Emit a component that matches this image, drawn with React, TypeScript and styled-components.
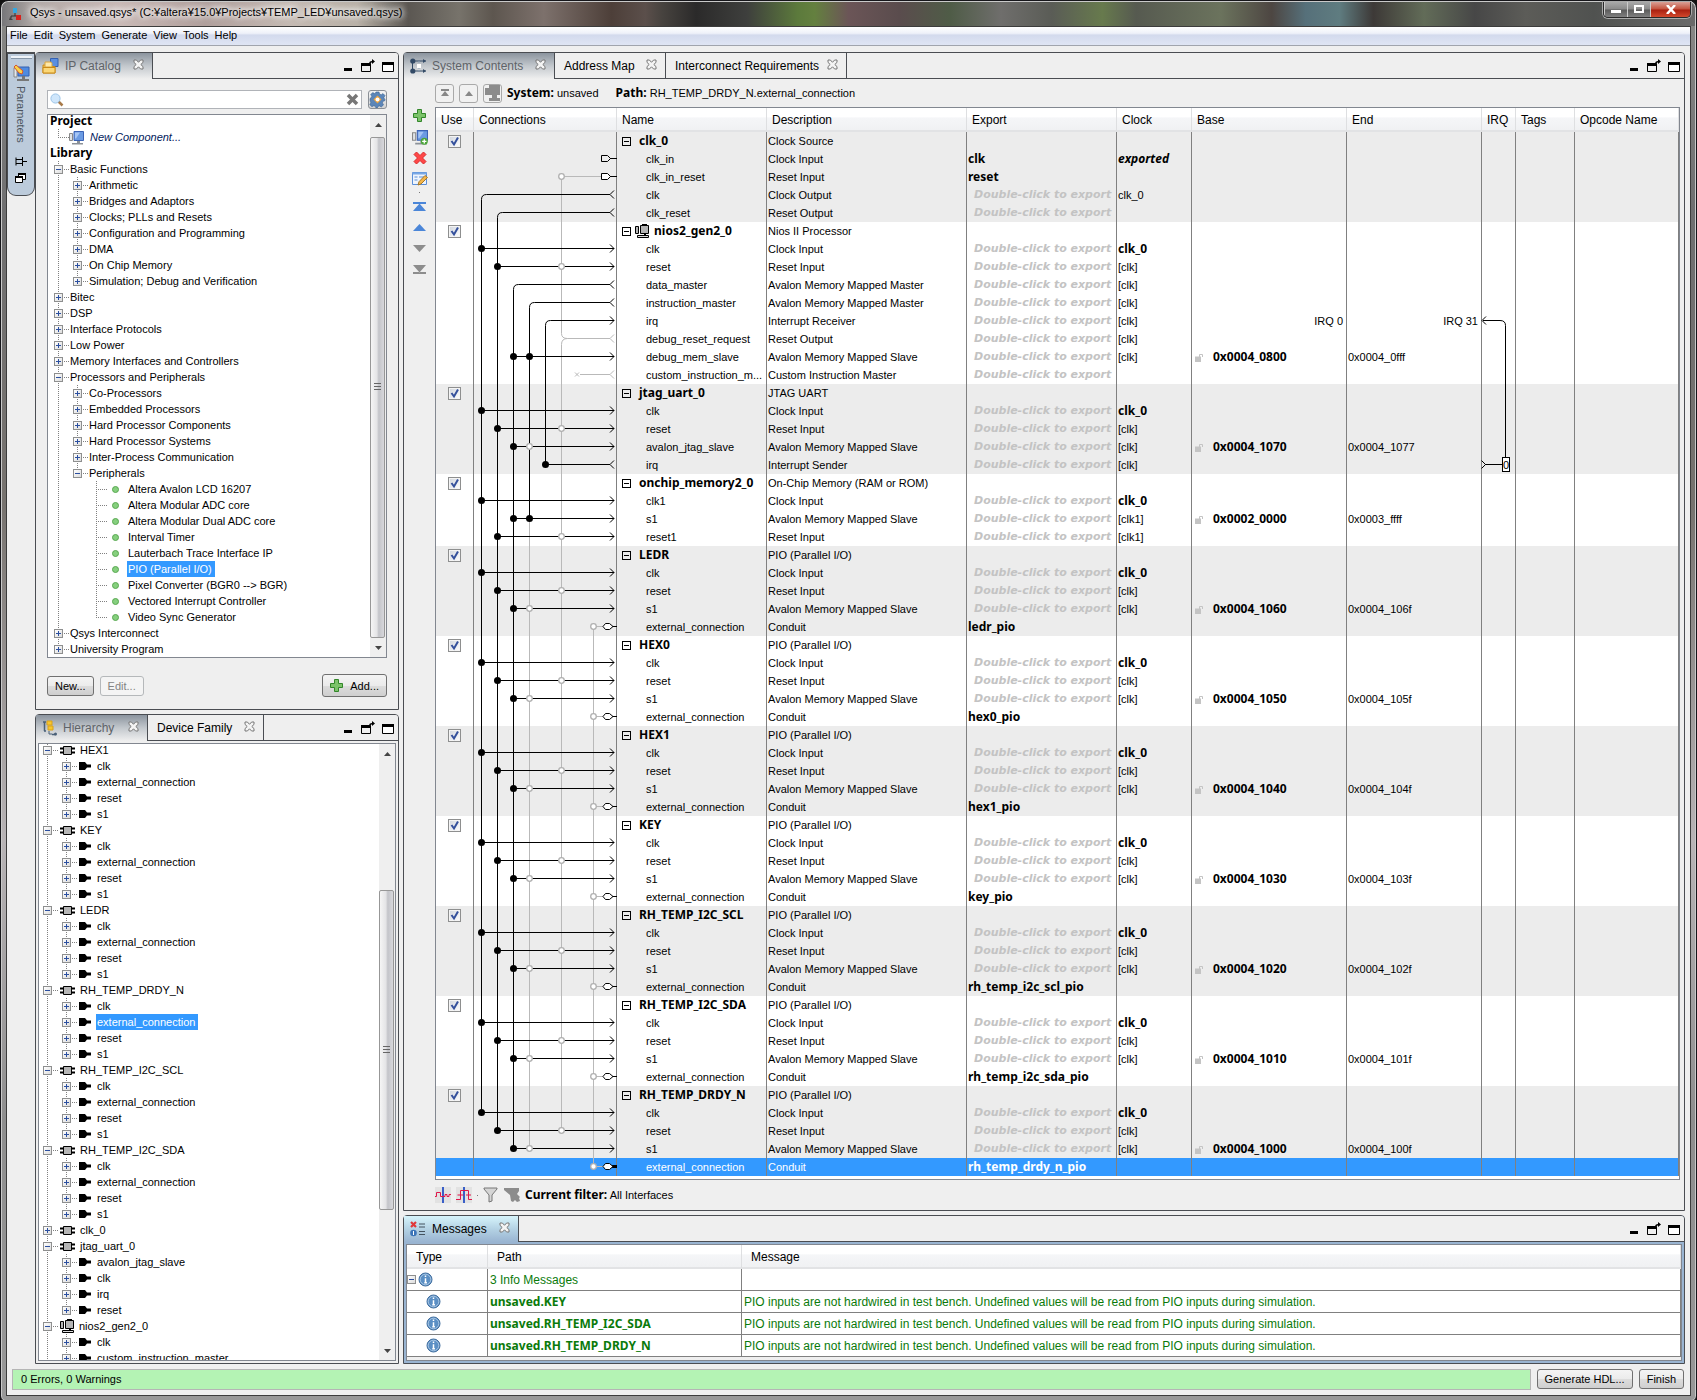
import React from "react";
import styled, { createGlobalStyle, css } from "styled-components";

const ui = `"Liberation Sans", "Noto Sans CJK JP", sans-serif`;
const strong = `"Noto Sans", "Open Sans", sans-serif`;
const ink = "#4a4d52";

const Global = createGlobalStyle`
  *, *::before, *::after { box-sizing: border-box; }
  body { margin: 0; background: #111; font: 11px/16px ${ui}; color: #000; }
  button, input { font: inherit; color: inherit; margin: 0; padding: 0; }
  button { border: 0; background: none; }
  svg { display: block; flex: none; }
`;

/* ---------- window frame ---------- */

const Frame = styled.div`
  display: flex;
  flex-direction: column;
  min-height: 100vh;
  padding: 0 5px 5px;
  border: 1px solid #16161a;
  border-radius: 8px 8px 6px 6px;
  box-shadow: inset 0 0 0 1px #c9c9c9;
  background: linear-gradient(180deg, #8a8a88 0, #6f6f70 15%, #77736f 36%, #b8b4b6 60%, #8e8e8e 80%, #989898 100%);
`;

const TitleBar = styled.header`
  display: flex;
  align-items: flex-start;
  height: 24px;
  margin: 1px -4px 0;
  padding-left: 6px;
  border-radius: 7px 7px 0 0;
  background: linear-gradient(90deg,
    #77777a 0, #b3aba8 2%, #c9b9b6 7%, #b09f9c 12%, #c5bab3 17%, #b9b1a7 21%, #5b5752 24%,
    #77736b 27%, #5d564f 29%, #7d716c 32%, #4d3f39 36%, #5b4f4b 38%, #47433f 39%, #2b2a2a 41%,
    #3e3f3d 44%, #5c7a3c 47%, #64803f 48%, #6b5557 50%, #5a4c4d 53%, #4f5c47 56%, #6f6e6c 59%,
    #5a5c56 62%, #677a4d 65%, #565a50 67%, #6b735d 72%, #4d4642 75%, #56707a 77%, #5f7c80 79%,
    #3d3937 81%, #626c58 84%, #474747 87%, #5c5c58 90%, #505250 94%, #6a6a6a 100%);
`;

const Title = styled.h1`
  flex: 1;
  margin: 2px 0 0 6px;
  font: 11px/17px ${ui};
  text-shadow: 0 0 6px #fff, 0 0 6px #fff, 0 0 8px #fff;
`;

const Caption = styled.div`
  display: flex;
  margin-right: 4px;
  border: 1px solid #2a2a2a;
  border-top: 0;
  border-radius: 0 0 5px 5px;
  overflow: hidden;
  box-shadow: 0 0 0 1px #aaa;
`;

const CaptionButton = styled.button<{ $close?: boolean }>`
  display: grid;
  place-items: center;
  width: ${(p) => (p.$close ? 40 : 23)}px;
  height: 15px;
  border-left: 1px solid #ccc;
  background: ${(p) =>
    p.$close
      ? "linear-gradient(#d9a096 0, #c4513c 48%, #a81f10 52%, #d2482c 100%)"
      : "linear-gradient(#a9a9a9 0, #8a8a8a 48%, #5a5a5a 52%, #808080 100%)"};
`;

const Client = styled.div`
  display: flex;
  flex: 1;
  flex-direction: column;
  border: 1px solid #3c3c3c;
  background: #efefef;
`;

const MenuBar = styled.nav`
  display: flex;
  gap: 6px;
  height: 19px;
  padding-left: 3px;
  border-bottom: 1px solid #a0a4ad;
  background: linear-gradient(#fff 0, #eef1f9 35%, #d3daed 45%, #dfe5f4 100%);
`;

const MenuItem = styled.button`
  height: 16px;
  line-height: 16px;
`;

const Workspace = styled.main`
  display: flex;
  flex: 1;
  padding: 6px 5px 0 0;
`;

const Dock = styled.aside`
  display: flex;
  flex-direction: column;
  align-items: center;
  gap: 5px;
  width: 28px;
  height: 144px;
  padding-top: 2px;
  border: 1px solid ${ink};
  border-top-width: 2px;
  border-radius: 0 0 9px 9px;
  background: #bccbdb;
`;

const Grip = styled.i`
  width: 21px;
  height: 3px;
  border: solid #8797a8;
  border-width: 0 0 1px;
  background: #eef3f8;
`;

const DockButton = styled.button`
  display: grid;
  place-items: center;
`;

const DockLabel = styled.span`
  writing-mode: vertical-rl;
  height: 66px;
  color: #4b545d;
`;

const LeftColumn = styled.div`
  display: flex;
  flex: none;
  flex-direction: column;
  gap: 4px;
  width: 364px;
`;

const RightColumn = styled.div`
  display: flex;
  flex: 1;
  flex-direction: column;
  gap: 4px;
  min-width: 0;
  margin-left: 4px;
`;

/* ---------- panels and tabs ---------- */

const Panel = styled.section<{ $grow?: boolean; $fill?: string }>`
  display: flex;
  flex-direction: column;
  min-height: 0;
  ${(p) => p.$grow && "flex: 1;"}
  border: 1px solid ${ink};
  border-radius: 4px 4px 0 0;
  background: ${(p) => p.$fill || "#efefef"};
`;

const TabStrip = styled.div`
  display: flex;
  flex: none;
  height: 26px;
  border-radius: 3px 3px 0 0;
  background: #efefef;
`;

const TabBox = styled.div<{ $width: number; $tone: "on" | "off" | "focus" }>`
  display: flex;
  align-items: center;
  width: ${(p) => p.$width}px;
  padding: 0 8px 0 6px;
  border-right: 1px solid ${ink};
  ${(p) =>
    p.$tone === "on" &&
    css`
      background: linear-gradient(#8b949e, #c3c8cd 50%, #efefef);
      color: #5f6368;
    `}
  ${(p) =>
    p.$tone === "off" &&
    css`
      padding-left: 9px;
      border-bottom: 1px solid ${ink};
    `}
  ${(p) =>
    p.$tone === "focus" &&
    css`
      background: linear-gradient(#d6f4fb, #b4d2e4 50%, #99b4d1);
    `}
`;

const TabName = styled.button`
  display: flex;
  flex: 1;
  align-items: center;
  gap: 6px;
  font-size: 12px;
  white-space: nowrap;
`;

const TabClose = styled.button`
  margin-bottom: 3px;
`;

const StripEnd = styled.div`
  display: flex;
  flex: 1;
  justify-content: flex-end;
  align-items: flex-start;
  gap: 7px;
  padding: 6px 4px 0 0;
  border-bottom: 1px solid ${ink};
`;

const IconButton = styled.button`
  display: grid;
  place-items: center;
  flex: none;
`;

const CloseGlyph = () => (
  <svg width="11" height="11" viewBox="0 0 11 11">
    <path d="M1 1h2.4l2.1 2.3L7.6 1H10v2.4L7.8 5.5 10 7.6V10H7.6L5.5 7.8 3.4 10H1V7.6l2.2-2.1L1 3.4z" fill="#f4f4f4" stroke="#777" strokeWidth="1" />
  </svg>
);

interface TabProps {
  label: string;
  width: number;
  tone: "on" | "off" | "focus";
  icon?: React.ReactNode;
}

const Tab = ({ label, width, tone, icon }: TabProps) => (
  <TabBox $width={width} $tone={tone}>
    <TabName>
      {icon}
      {label}
    </TabName>
    <TabClose aria-label={`Close ${label}`}>
      <CloseGlyph />
    </TabClose>
  </TabBox>
);

const PanelControls = () => (
  <StripEnd>
    <IconButton aria-label="Minimize">
      <svg width="9" height="14"><rect y="9" width="8" height="3" /></svg>
    </IconButton>
    <IconButton aria-label="Float">
      <svg width="15" height="14">
        <path d="M1.500 4.500h9v8h-9z" fill="none" stroke="#000" />
        <path d="M1 4h9v3H1zM9 5c0-2 1-3 3-3V0l3 2.500L12 5V3.500c-1 0-1.500.5-1.500 1.500z" />
      </svg>
    </IconButton>
    <IconButton aria-label="Maximize">
      <svg width="12" height="14">
        <path d="M.5 4.500h11v8H.5z" fill="#fff" stroke="#000" />
        <path d="M0 3h12v3H0z" />
      </svg>
    </IconButton>
  </StripEnd>
);

/* ---------- icons ---------- */

const AppIcon = () => (
  <svg width="13" height="14" viewBox="0 0 13 14">
    <path d="M4 1h4v5H4z" fill="#35a8e0" />
    <path d="M6 6v3H2v2M6 9h4" stroke="#333" fill="none" />
    <path d="M1 10l3 3H0z" fill="#444" />
    <path d="M7 8h5v5H7z" fill="#d8221c" />
  </svg>
);

const Board = ({ size = 15, plus }: { size?: number; plus?: boolean }) => (
  <svg width={size} height={size} viewBox="0 0 15 15">
    <path d="M.5 3.500h3v7h-3z" fill="#e0e4e8" stroke="#888" />
    <path d="M5 1.500h9.500v9H5z" fill="#6b9be3" stroke="#3b63b5" />
    <path d="M6 2.500h5l-4 6H6z" fill="#a5c5f5" />
    <path d="M8 11h3v2H8zM3 13h11v1.500H3z" fill="#8b9198" />
    {plus && (
      <>
        <circle cx="11.500" cy="11.500" r="3.300" fill="#4ca53a" />
        <path d="M11.500 9.500v4M9.500 11.500h4" stroke="#fff" strokeWidth="1.200" />
      </>
    )}
  </svg>
);

const CatalogIcon = () => (
  <svg width="17" height="16" viewBox="0 0 17 16">
    <path d="M8.500.5H16v8H8.500z" fill="#5b8fe0" stroke="#3560b0" />
    <path d="M1 7h5l1 1.500h6V15H1z" fill="#f6c454" stroke="#c98a18" />
    <path d="M3 4h6l1 1.500V9H3z" fill="#ffe9a8" stroke="#d9a43a" />
    <path d="M1 9.500h12V15H1z" fill="#fbd777" stroke="#c98a18" />
  </svg>
);

const TreeIcon = () => (
  <svg width="15" height="16" viewBox="0 0 15 16">
    <path d="M1 2h3M2.500 2v9M2 11h2M10 14.500h4" stroke="#4a6078" strokeWidth="1.500" fill="none" />
    <path d="M5 1h5v4H5zM6 6h5v4H6z" fill="#f7c62d" stroke="#d9a21a" />
    <path d="M7 11v3h3" stroke="#4a6078" fill="none" />
    <circle cx="13.500" cy="14" r="1.500" fill="#4a6078" />
  </svg>
);

const ContentsIcon = () => (
  <svg width="16" height="16" viewBox="0 0 16 16">
    <path d="M2.500 3v11M2.500 3H16M2.500 13H16" stroke="#324a66" fill="none" />
    <circle cx="2.800" cy="3" r="2.600" fill="#324a66" />
    <circle cx="2.800" cy="13" r="2.600" fill="#324a66" />
    <path d="M9 3v10" stroke="#8fa3b8" strokeDasharray="2 1" />
    <path d="M7 6h4v4H7z" fill="#fff" />
    <path d="M13 1l3 2-3 2zM13 11l3 2-3 2z" fill="#324a66" />
  </svg>
);

const MessagesIcon = () => (
  <svg width="16" height="16" viewBox="0 0 16 16">
    <path d="M1 1l5 5M6 1L1 6" stroke="#e0383a" strokeWidth="2.200" />
    <circle cx="3.500" cy="12" r="3.300" fill="#3c74b8" />
    <path d="M3.500 10v4" stroke="#fff" />
    <path d="M9 3h6M9 6h6M9 10.500h6M9 13.500h6" stroke="#44525f" />
  </svg>
);

const Plus = () => (
  <svg width="13" height="13" viewBox="0 0 13 13">
    <path d="M4.500.5h4v4h4v4h-4v4h-4v-4h-4v-4h4z" fill="#7cc36a" stroke="#33862a" />
  </svg>
);

const Cross = () => (
  <svg width="14" height="14" viewBox="0 0 14 14">
    <path d="M3.500 1L7 4.500 10.500 1 13 3.500 9.500 7l3.500 3.500-2.500 2.500L7 9.500 3.500 13 1 10.500 4.500 7 1 3.500z" fill="#ff4747" stroke="#d92c2c" />
  </svg>
);

const EditIcon = () => (
  <svg width="16" height="15" viewBox="0 0 16 15">
    <path d="M.5 1.500h14v12H.5z" fill="#eef4fc" stroke="#5b8fd8" />
    <path d="M.5 1.500h14v2H.5z" fill="#79a8e6" />
    <path d="M2.500 6h3M2.500 9h3M7 6h5" stroke="#5b8fd8" />
    <path d="M13 4.500l2.500 2L9 13l-3 1 1-3.300z" fill="#f4b64a" stroke="#a5772a" />
  </svg>
);

const Arrow = ({ kind, color }: { kind: "top" | "up" | "down" | "bottom"; color: string }) => (
  <svg width="13" height="11" viewBox="0 0 13 11">
    {kind === "top" && <path d="M0 1h13v2H0zM6.500 2.500L13 10H0z" fill={color} />}
    {kind === "up" && <path d="M6.500 2L13 9H0z" fill={color} />}
    {kind === "down" && <path d="M6.500 9L13 2H0z" fill={color} />}
    {kind === "bottom" && <path d="M0 8h13v2H0zM6.500 8.500L13 1H0z" fill={color} />}
  </svg>
);

const Gear = () => (
  <svg width="17" height="17" viewBox="0 0 17 17">
    <path d="M7 1h3l.5 2 1.800.8L14 2.600l2 2-1.100 1.900.6 1.500.5.500v1l-2 .8-.6 1.600 1.100 2-2.200 2-1.900-1-1.500.6-.6 1.500H7l-.7-1.700-1.500-.6-2 1-2-2.100 1-1.900-.6-1.500L1 9V7.500l1-.5.800-1.700L1.700 3.600l2-2 1.900 1L6.500 2z" fill="#5c86b8" stroke="#3f6695" strokeWidth=".6" />
    <path d="M8.500 4.500l4 4-4 4-4-4z" fill="#f1a33b" />
    <circle cx="8.500" cy="8.500" r="2" fill="#fff" />
  </svg>
);

const Magnifier = () => (
  <svg width="14" height="14" viewBox="0 0 14 14">
    <path d="M8.500 8.500l4 4" stroke="#a87a4a" strokeWidth="2.500" />
    <circle cx="5.500" cy="5.500" r="4.600" fill="#cfe6fb" stroke="#9cc4e8" />
  </svg>
);

const Chip = () => (
  <svg width="16" height="11" viewBox="0 0 16 11">
    <path d="M0 3.500h15M0 7.500h15" stroke="#000" strokeWidth="2" />
    <path d="M3.500 1.500h8v8h-8z" fill="#b5b5b5" stroke="#000" />
  </svg>
);

const Plug = () => (
  <svg width="14" height="8" viewBox="0 0 14 8">
    <path d="M0 0h6l2 2.500h4v3H8L6 8H0z" />
  </svg>
);

const Cpu = () => (
  <svg width="15" height="14" viewBox="0 0 15 14">
    <path d="M.5 2.500h3v7h-3zM5.500 1.500h8v8h-8z" fill="#b5b5b5" stroke="#000" />
    <path d="M7 0h5v1H7zM9 10h2v2H9z" />
    <path d="M2.500 11.500h11v2h-11z" fill="#ddd" stroke="#000" />
  </svg>
);

const Funnel = ({ clear }: { clear?: boolean }) => (
  <svg width="16" height="16" viewBox="0 0 16 16">
    {clear ? (
      <path d="M0 1h15v3l-2 3 3 3-1 1 1 3-3 1-2-2-2 2-2-1-1-6L0 3z" fill="#8c8c8c" />
    ) : (
      <path d="M1 1h13v1L9 8v6l-3 1V8L1 2z" fill="#d5d5d5" stroke="#777" />
    )}
  </svg>
);

const Wave = ({ split }: { split?: boolean }) => (
  <svg width="16" height="16" viewBox="0 0 16 16">
    <path d="M0 0h16v16H0z" fill="#e2e2e2" />
    <path d="M7 0h2v16H7z" fill="#3a5fc8" />
    {split ? (
      <path d="M0 12.500h4.500V3.500h8v9H16M1.500 8h6M10 8h5" stroke="#e0174b" fill="none" />
    ) : (
      <path d="M0 9.500h1.500v-4h4v4H10v-2h2v2h2v-2h2" stroke="#e0174b" fill="none" />
    )}
  </svg>
);

const Info = () => (
  <svg width="15" height="15" viewBox="0 0 15 15">
    <circle cx="7.500" cy="7.500" r="6.500" fill="#5b8fc4" stroke="#3f6d9e" />
    <circle cx="7.500" cy="7.500" r="5.300" fill="none" stroke="#b9d2ea" strokeWidth=".8" />
    <path d="M7.500 3.500v1.600M7.500 6.300v4M6.300 10.800h2.600" stroke="#fff" strokeWidth="1.500" />
  </svg>
);

const Lock = () => (
  <svg width="9" height="9" viewBox="0 0 9 9">
    <path d="M0 3.500h6V9H0z" fill="#c4c4c4" />
    <path d="M4.500 4V1.500h3V4" fill="none" stroke="#c4c4c4" />
  </svg>
);

/* ---------- trees ---------- */

const Scroller = styled.div<{ $grow?: boolean }>`
  display: flex;
  min-height: 0;
  overflow: hidden;
  ${(p) => p.$grow && "flex: 1 1 0;"}
  border: 1px solid #828790;
  background: #fff;
`;

const TreeList = styled.ul<{ $indent: number }>`
  flex: 1;
  margin: -2px 0 0;
  padding: 0 0 0 ${(p) => p.$indent}px;
  list-style: none;
`;

const TreeItem = styled.li`
  display: flex;
  align-items: center;
  height: 16px;
  white-space: nowrap;
`;

const RootItem = styled(TreeItem)`
  margin-left: -4px;
  font: bold 12px/16px ${strong};
`;

const dotsV = "repeating-linear-gradient(180deg, #808080 0 1px, transparent 1px 2px)";
const dotsH = "repeating-linear-gradient(90deg, #808080 0 1px, transparent 1px 2px)";

const Guide = styled.i<{ $line: boolean }>`
  flex: none;
  width: 19px;
  height: 16px;
  background: ${(p) => (p.$line ? `${dotsV} 4px 0 / 1px 16px no-repeat` : "none")};
`;

const Joint = styled.span<{ $last?: boolean }>`
  display: flex;
  flex: none;
  align-items: center;
  width: 15px;
  height: 16px;
  background: ${dotsV} 4px 0 / 1px ${(p) => (p.$last ? 8 : 16)}px no-repeat,
    ${dotsH} 4px 8px / 11px 1px no-repeat;
`;

const Expander = styled.button<{ $dark?: boolean }>`
  display: grid;
  place-items: center;
  flex: none;
  width: 9px;
  height: 9px;
  border: 1px solid ${(p) => (p.$dark ? "#000" : "#8e8f8f")};
  background: ${(p) => (p.$dark ? "transparent" : "linear-gradient(135deg, #fff, #dcdcdc)")};
`;

const ExpandMark = ({ open, dark }: { open?: boolean; dark?: boolean }) => (
  <Expander $dark={dark} aria-label={open ? "Collapse" : "Expand"}>
    <svg width="5" height="5">
      <path d={open ? "M0 2.500h5" : "M0 2.500h5M2.500 0v5"} stroke={dark ? "#000" : "#2b4fa0"} />
    </svg>
  </Expander>
);

const NodeIcon = styled.span`
  margin: 0 3px 0 2px;
`;

const NodeLabel = styled.span<{ $selected?: boolean; $italic?: boolean }>`
  padding: 0 3px 0 1px;
  ${(p) => p.$selected && "background: #3399ff; color: #fff;"}
  ${(p) => p.$italic && "font-style: italic; color: #00205c;"}
`;

const Bullet = styled.i`
  width: 7px;
  height: 7px;
  margin: 0 8px 0 5px;
  border: 1px solid #58a850;
  border-radius: 50%;
  background: #86cf7e;
`;

const ScrollBar = styled.div`
  display: flex;
  flex: none;
  flex-direction: column;
  width: 16px;
  background: #efefef;
`;

const ScrollArrow = styled.button`
  display: grid;
  place-items: center;
  height: 19px;
`;

const Track = styled.div<{ $before: number; $after: number }>`
  display: flex;
  flex: 1;
  padding: ${(p) => p.$before}px 1px ${(p) => p.$after}px 0;
`;

const Thumb = styled.div`
  display: grid;
  flex: 1;
  place-items: center;
  border: 1px solid #979797;
  border-radius: 2px;
  background: linear-gradient(90deg, #f5f5f5, #e4e4e6 45%, #c3c4c9 60%, #d8d8dc);
`;

const Bar = ({ before = 0, after = 0 }: { before?: number; after?: number }) => (
  <ScrollBar>
    <ScrollArrow aria-label="Scroll up">
      <svg width="7" height="4"><path d="M3.500 0L7 4H0z" fill="#444" /></svg>
    </ScrollArrow>
    <Track $before={before} $after={after}>
      <Thumb>
        <svg width="7" height="9"><path d="M0 .5h7M0 3.500h7M0 6.500h7" stroke="#666" /></svg>
      </Thumb>
    </Track>
    <ScrollArrow aria-label="Scroll down">
      <svg width="7" height="4"><path d="M3.500 4L7 0H0z" fill="#444" /></svg>
    </ScrollArrow>
  </ScrollBar>
);

interface CatNode {
  name: string;
  kids?: CatNode[];
  leaf?: boolean;
}

const branch = (...names: string[]): CatNode[] => names.map((name) => ({ name }));

const library: CatNode[] = [
  {
    name: "Basic Functions",
    kids: branch("Arithmetic", "Bridges and Adaptors", "Clocks; PLLs and Resets", "Configuration and Programming", "DMA", "On Chip Memory", "Simulation; Debug and Verification"),
  },
  ...branch("Bitec", "DSP", "Interface Protocols", "Low Power", "Memory Interfaces and Controllers"),
  {
    name: "Processors and Peripherals",
    kids: [
      ...branch("Co-Processors", "Embedded Processors", "Hard Processor Components", "Hard Processor Systems", "Inter-Process Communication"),
      {
        name: "Peripherals",
        kids: [
          "Altera Avalon LCD 16207",
          "Altera Modular ADC core",
          "Altera Modular Dual ADC core",
          "Interval Timer",
          "Lauterbach Trace Interface IP",
          "PIO (Parallel I/O)",
          "Pixel Converter (BGR0 --> BGR)",
          "Vectored Interrupt Controller",
          "Video Sync Generator",
        ].map((name) => ({ name, leaf: true })),
      },
    ],
  },
  ...branch("Qsys Interconnect", "University Program"),
];

const CatalogRows = ({ nodes, guides }: { nodes: CatNode[]; guides: boolean[] }) => (
  <>
    {nodes.map((n, i) => {
      const last = i === nodes.length - 1;
      return (
        <React.Fragment key={n.name}>
          <TreeItem>
            {guides.map((g, k) => (
              <Guide key={k} $line={g} />
            ))}
            <Joint $last={last}>{!n.leaf && <ExpandMark open={!!n.kids} />}</Joint>
            {n.leaf && <Bullet />}
            <NodeLabel $selected={n.name.startsWith("PIO")}>{n.name}</NodeLabel>
          </TreeItem>
          {n.kids && <CatalogRows nodes={n.kids} guides={[...guides, !last]} />}
        </React.Fragment>
      );
    })}
  </>
);

const pioPorts = ["clk", "external_connection", "reset", "s1"];
const hierarchy: { name: string; kids: string[] }[] = [
  { name: "HEX1", kids: pioPorts },
  { name: "KEY", kids: pioPorts },
  { name: "LEDR", kids: pioPorts },
  { name: "RH_TEMP_DRDY_N", kids: pioPorts },
  { name: "RH_TEMP_I2C_SCL", kids: pioPorts },
  { name: "RH_TEMP_I2C_SDA", kids: pioPorts },
  { name: "clk_0", kids: [] },
  { name: "jtag_uart_0", kids: ["avalon_jtag_slave", "clk", "irq", "reset"] },
  { name: "nios2_gen2_0", kids: ["clk", "custom_instruction_master"] },
];

/* ---------- IP catalog ---------- */

const CatalogBody = styled.div`
  display: flex;
  flex-direction: column;
  padding: 11px 11px 12px;
`;

const SearchRow = styled.div`
  display: flex;
  align-items: center;
  gap: 6px;
  margin-bottom: 5px;
`;

const SearchBox = styled.label`
  display: flex;
  flex: 1;
  align-items: center;
  height: 19px;
  padding: 0 2px;
  border: 1px solid #b0b3b8;
  background: #fff;
`;

const SearchInput = styled.input`
  flex: 1;
  min-width: 0;
  border: 0;
  outline: 0;
  background: none;
`;

const PushButton = styled.button<{ $tall?: boolean }>`
  display: flex;
  align-items: center;
  justify-content: center;
  gap: 7px;
  height: ${(p) => (p.$tall ? 23 : 20)}px;
  padding: 0 7px;
  border: 1px solid #707070;
  border-radius: 3px;
  background: linear-gradient(#f4f4f4 0, #ebebeb 50%, #dcdcdc 52%, #cfcfcf 100%);
  &:disabled {
    border-color: #b5b8ba;
    background: #f4f4f4;
    color: #838383;
  }
`;

const GearButton = styled(IconButton)`
  width: 19px;
  height: 19px;
  border: 1px solid #8a8f96;
  border-radius: 3px;
  background: linear-gradient(#f4f4f4, #d4d4d4);
`;

const ButtonRow = styled.div`
  display: flex;
  align-items: center;
  gap: 6px;
  margin-top: 16px;
`;

const Push = styled.span`
  flex: 1;
`;

const HierarchyBody = styled.div`
  display: flex;
  flex: 1;
  flex-direction: column;
  min-height: 0;
  padding: 2px;
`;

/* ---------- system contents ---------- */

const ContentsBody = styled.div`
  display: flex;
  flex: 1;
`;

const SideTools = styled.div`
  display: flex;
  flex: none;
  flex-direction: column;
  align-items: center;
  gap: 6px;
  width: 31px;
  padding-top: 29px;
`;

const ToolButton = styled(IconButton)`
  width: 16px;
  height: 15px;
`;

const Speck = styled.i`
  width: 1px;
  height: 1px;
  background: #777;
`;

const ContentsMain = styled.div`
  display: flex;
  flex: 1;
  flex-direction: column;
  min-width: 0;
  padding-right: 4px;
`;

const InfoBar = styled.div<{ $height: number }>`
  display: flex;
  flex: none;
  align-items: center;
  gap: 5px;
  height: ${(p) => p.$height}px;
`;

const PathButton = styled(IconButton)`
  width: 19px;
  height: 19px;
  border: 1px solid #a9a9a9;
  border-radius: 3px;
  background: #f1f1f1;
`;

const InfoText = styled.span`
  margin-right: 12px;
`;

const Strong = styled.b`
  font: bold 12px/16px ${strong};
`;

const GridBox = styled.div`
  position: relative;
  flex: 1;
  padding-bottom: 3px;
  border: 1px solid #828790;
  background: #fff;
`;

const Grid = styled.table`
  width: 100%;
  border-spacing: 0;
  table-layout: fixed;
`;

const HeadCell = styled.th<{ $height: number; $pad?: number }>`
  height: ${(p) => p.$height}px;
  padding: 2px 0 0 ${(p) => p.$pad || 5}px;
  border-right: 1px solid #dedfe1;
  border-bottom: 2px solid #e2e3e5;
  background: linear-gradient(#fff 0 40%, #f5f6f8 45%, #f0f1f3 100%);
  font-weight: normal;
  text-align: left;
  font-size: 12px;
  line-height: 16px;
`;

const Row = styled.tr<{ $tone: "grey" | "white" | "selected" }>`
  background: ${(p) => ({ grey: "#ececec", white: "#fff", selected: "#3399ff" })[p.$tone]};
  color: ${(p) => (p.$tone === "selected" ? "#fff" : "#000")};
`;

const Cell = styled.td<{ $bold?: boolean; $right?: boolean }>`
  height: 18px;
  padding: 0 0 0 1px;
  border-right: 1px solid #808080;
  overflow: hidden;
  white-space: nowrap;
  text-overflow: ellipsis;
  line-height: 18px;
  ${(p) => p.$bold && `font: bold 12px/18px ${strong};`}
  ${(p) => p.$right && "text-align: right; padding-right: 3px;"}
`;

const NameCell = styled(Cell)`
  padding: 0 0 0 29px;
`;

const ModuleName = styled.span`
  display: flex;
  align-items: center;
  gap: 4px;
  padding-left: 5px;
  font: bold 12px/18px ${strong};
`;

const ModuleText = styled.span`
  padding-left: 4px;
`;

const ModuleCell = styled(Cell)`
  padding: 0;
`;

const Hint = styled.span`
  display: block;
  padding-left: 6px;
  color: #c3c3c3;
  font: italic bold 11px/18px "DejaVu Sans", sans-serif;
`;

const Address = styled.span`
  display: flex;
  align-items: center;
  gap: 9px;
  padding-left: 2px;
  font: bold 12px/18px ${strong};
`;

const Check = styled.label`
  display: grid;
  width: 13px;
  margin-left: 12px;
  > * {
    grid-area: 1 / 1;
  }
`;

const CheckInput = styled.input`
  appearance: none;
  width: 13px;
  height: 13px;
  border: 1px solid #8e8f8f;
  background: linear-gradient(135deg, #cfd4dc, #fff);
  box-shadow: inset 0 0 0 1px #f4f4f4;
`;

const Wires = styled.svg`
  position: absolute;
  top: 24px;
  left: 0;
  pointer-events: none;
`;

type Port = {
  name: string;
  desc: string;
  exp?: string;
  clock?: string;
  base?: string;
  end?: string;
};
type Module = { name: string; desc: string; cpu?: boolean; ports: Port[] };

const D = "Double-click to export";
const MM = "Avalon Memory Mapped ";
const pio = (name: string, exp: string, addr: string): Module => ({
  name,
  desc: "PIO (Parallel I/O)",
  ports: [
    { name: "clk", desc: "Clock Input", exp: D, clock: "clk_0" },
    { name: "reset", desc: "Reset Input", exp: D, clock: "[clk]" },
    { name: "s1", desc: MM + "Slave", exp: D, clock: "[clk]", base: `0x0004_${addr}0`, end: `0x0004_${addr}f` },
    { name: "external_connection", desc: "Conduit", exp },
  ],
});

const modules: Module[] = [
  {
    name: "clk_0",
    desc: "Clock Source",
    ports: [
      { name: "clk_in", desc: "Clock Input", exp: "clk", clock: "exported" },
      { name: "clk_in_reset", desc: "Reset Input", exp: "reset" },
      { name: "clk", desc: "Clock Output", exp: D, clock: "clk_0 " },
      { name: "clk_reset", desc: "Reset Output", exp: D },
    ],
  },
  {
    name: "nios2_gen2_0",
    desc: "Nios II Processor",
    cpu: true,
    ports: [
      { name: "clk", desc: "Clock Input", exp: D, clock: "clk_0" },
      { name: "reset", desc: "Reset Input", exp: D, clock: "[clk]" },
      { name: "data_master", desc: MM + "Master", exp: D, clock: "[clk]" },
      { name: "instruction_master", desc: MM + "Master", exp: D, clock: "[clk]" },
      { name: "irq", desc: "Interrupt Receiver", exp: D, clock: "[clk]", base: "IRQ 0", end: "IRQ 31" },
      { name: "debug_reset_request", desc: "Reset Output", exp: D, clock: "[clk]" },
      { name: "debug_mem_slave", desc: MM + "Slave", exp: D, clock: "[clk]", base: "0x0004_0800", end: "0x0004_0fff" },
      { name: "custom_instruction_m...", desc: "Custom Instruction Master", exp: D },
    ],
  },
  {
    name: "jtag_uart_0",
    desc: "JTAG UART",
    ports: [
      { name: "clk", desc: "Clock Input", exp: D, clock: "clk_0" },
      { name: "reset", desc: "Reset Input", exp: D, clock: "[clk]" },
      { name: "avalon_jtag_slave", desc: MM + "Slave", exp: D, clock: "[clk]", base: "0x0004_1070", end: "0x0004_1077" },
      { name: "irq", desc: "Interrupt Sender", exp: D, clock: "[clk]" },
    ],
  },
  {
    name: "onchip_memory2_0",
    desc: "On-Chip Memory (RAM or ROM)",
    ports: [
      { name: "clk1", desc: "Clock Input", exp: D, clock: "clk_0" },
      { name: "s1", desc: MM + "Slave", exp: D, clock: "[clk1]", base: "0x0002_0000", end: "0x0003_ffff" },
      { name: "reset1", desc: "Reset Input", exp: D, clock: "[clk1]" },
    ],
  },
  pio("LEDR", "ledr_pio", "106"),
  pio("HEX0", "hex0_pio", "105"),
  pio("HEX1", "hex1_pio", "104"),
  pio("KEY", "key_pio", "103"),
  pio("RH_TEMP_I2C_SCL", "rh_temp_i2c_scl_pio", "102"),
  pio("RH_TEMP_I2C_SDA", "rh_temp_i2c_sda_pio", "101"),
  pio("RH_TEMP_DRDY_N", "rh_temp_drdy_n_pio", "100"),
];

const columns: [string, number | undefined][] = [
  ["Use", 38],
  ["Connections", 143],
  ["Name", 150],
  ["Description", 200],
  ["Export", 150],
  ["Clock", 75],
  ["Base", 155],
  ["End", 135],
  ["IRQ", 34],
  ["Tags", 59],
  ["Opcode Name", undefined],
];

const rowY = (r: number) => r * 18 + 8.5;
const lane = (n: number) => 45.5 + n * 16;
const pioStarts = [23, 28, 33, 38, 43, 48, 53];
const tip = 178;
const grey = "#b9b9b9";

const Diagram = () => {
  const arrow = (r: number) => `M${tip - 4} ${rowY(r) - 4}l4 4l-4 4`;
  const tail = (r: number) => `M${tip} ${rowY(r) - 4}l-4 4l4 4`;
  const turn = (n: number, from: number, to: number) =>
    `M${tip - 4} ${rowY(from)}H${lane(n) + 5}Q${lane(n)} ${rowY(from)} ${lane(n)} ${rowY(from) + 5}V${rowY(to)}`;
  const clkRows = [6, 15, 20, ...pioStarts.map((s) => s + 1)];
  const resetRows = [7, 16, 22, ...pioStarts.map((s) => s + 2)];
  const slaveRows = [17, ...pioStarts.map((s) => s + 3)];
  const link = (n: number, rows: number[]) => rows.map((r) => `M${lane(n)} ${rowY(r)}H${tip}${arrow(r)}`).join("");
  const dots: [number, number][] = [
    ...clkRows.map((r): [number, number] => [0, r]),
    ...resetRows.map((r): [number, number] => [1, r]),
    ...slaveRows.map((r): [number, number] => [2, r]),
    [2, 12], [3, 12], [2, 21], [3, 21], [4, 18],
  ];
  const rings: [number, number][] = [
    [5, 2],
    ...resetRows.map((r): [number, number] => [5, r]),
    ...slaveRows.map((r): [number, number] => [3, r]),
    ...pioStarts.map((s): [number, number] => [7, s + 4]),
  ];
  return (
    <Wires width="1100" height="1044" fill="none" stroke="#000">
      <g stroke={grey}>
        <path d={`M${lane(5)} ${rowY(2)}V${rowY(11) - 5}Q${lane(5)} ${rowY(11)} ${lane(5) + 6} ${rowY(11)}H${tip - 4}${tail(11)}`} />
        <path d={`M${lane(5) + 6} ${rowY(11)}Q${lane(5)} ${rowY(11)} ${lane(5)} ${rowY(11) + 6}V${rowY(55)}`} />
        <path d={`M${lane(5)} ${rowY(2)}H165M${lane(3)} ${rowY(21)}V${rowY(56)}M${lane(7)} ${rowY(27)}V${rowY(57)}`} />
        <path d={`M144 ${rowY(13)}H${tip - 4}${tail(13)}M139 ${rowY(13) - 2}l4 4m0-4l-4 4`} />
        <path d={pioStarts.map((s) => `M${lane(7)} ${rowY(s + 4)}h10`).join("")} />
      </g>
      <path d={turn(0, 3, 54) + tail(3) + turn(1, 4, 55) + tail(4)} />
      <path d={turn(2, 8, 56) + tail(8) + turn(3, 9, 21) + tail(9) + turn(4, 10, 18) + `M${tip - 4} ${rowY(10)}H${tip}` + arrow(10)} />
      <path d={link(0, clkRows) + link(1, resetRows) + link(2, [12, 21, ...slaveRows])} />
      <path d={`M${lane(4)} ${rowY(18)}H${tip - 4}${tail(18)}`} />
      {[1, 2].map((r) => (
        <path key={r} d={`M165.500 ${rowY(r) - 3}h6l3 3l-3 3h-6zM174 ${rowY(r)}h7`} fill={r === 1 ? "#ececec" : "#fff"} />
      ))}
      {pioStarts.map((s) => (
        <g key={s}>
          <path d={`M176 ${rowY(s + 4)}h5`} strokeWidth={s === 53 ? 3 : 1} />
          <path d={`M167 ${rowY(s + 4)}l2.500-3h4l3.500 3l-3.500 3h-4z`} fill="#fff" />
        </g>
      ))}
      {dots.map(([n, r]) => (
        <circle key={`${n}-${r}`} cx={lane(n)} cy={rowY(r)} r="3.500" fill="#000" stroke="none" />
      ))}
      {rings.map(([n, r]) => (
        <circle key={`${n}-${r}`} cx={lane(n)} cy={rowY(r)} r="2.800" fill="#fff" stroke="#b0b0b0" strokeWidth="1.300" />
      ))}
      <path d={`M1047 ${rowY(10)}h17Q1069.500 ${rowY(10)} 1069.500 ${rowY(10) + 5}V${rowY(18) - 6}M1050 ${rowY(10) - 4}l-4 4l4 4`} />
      <path d={`M1049 ${rowY(18)}h17M1045.500 ${rowY(18) - 4}l4 4l-4 4`} />
      <rect x="1066.500" y={rowY(18) - 7} width="7" height="14" fill="#fff" />
      <text x="1070" y={rowY(18) + 4} textAnchor="middle" fontSize="11" fill="#000" stroke="none">0</text>
    </Wires>
  );
};

const ClockCell = ({ value }: { value?: string }) =>
  value === "exported" ? (
    <Cell $bold>
      <em>exported</em>
    </Cell>
  ) : (
    <Cell $bold={value === "clk_0"}>{value}</Cell>
  );

const ContentsTable = () => (
  <GridBox>
    <Grid>
      <colgroup>
        {columns.map(([name, w]) => (
          <col key={name} width={w} />
        ))}
      </colgroup>
      <thead>
        <tr>
          {columns.map(([name]) => (
            <HeadCell key={name} $height={24} scope="col">
              {name}
            </HeadCell>
          ))}
        </tr>
      </thead>
      <tbody>
        {modules.map((m, i) => {
          const tone = i % 2 ? "white" : "grey";
          return (
            <React.Fragment key={m.name}>
              <Row $tone={tone}>
                <ModuleCell>
                  <Check>
                    <CheckInput type="checkbox" defaultChecked aria-label={`Use ${m.name}`} />
                    <svg width="13" height="13">
                      <path d="M3.500 6l2.500 3.500L10 2.500" fill="none" stroke="#34509c" strokeWidth="2" />
                    </svg>
                  </Check>
                </ModuleCell>
                <Cell />
                <ModuleCell>
                  <ModuleName>
                    <ExpandMark open dark />
                    {m.cpu && <Cpu />}
                    {m.cpu ? m.name : <ModuleText>{m.name}</ModuleText>}
                  </ModuleName>
                </ModuleCell>
                <Cell>{m.desc}</Cell>
                <Cell />
                <Cell />
                <Cell />
                <Cell />
                <Cell />
                <Cell />
                <Cell />
              </Row>
              {m.ports.map((p) => {
                const isIrq = p.base?.startsWith("IRQ");
                return (
                  <Row key={p.name} $tone={p.exp === "rh_temp_drdy_n_pio" ? "selected" : tone}>
                    <Cell />
                    <Cell />
                    <NameCell>{p.name}</NameCell>
                    <Cell>{p.desc}</Cell>
                    <Cell $bold>{p.exp === D ? <Hint>{p.exp}</Hint> : p.exp}</Cell>
                    <ClockCell value={p.clock} />
                    {isIrq || !p.base ? (
                      <Cell $right>{p.base}</Cell>
                    ) : (
                      <Cell>
                        <Address>
                          <Lock />
                          {p.base}
                        </Address>
                      </Cell>
                    )}
                    <Cell $right={isIrq}>{p.end}</Cell>
                    <Cell />
                    <Cell />
                    <Cell />
                  </Row>
                );
              })}
            </React.Fragment>
          );
        })}
      </tbody>
    </Grid>
    <Diagram />
  </GridBox>
);

/* ---------- messages ---------- */

const MessagesBody = styled.div`
  padding: 2px;
`;

const MessagesBox = styled.div`
  padding-bottom: 3px;
  border: 1px solid #828790;
  background: #efefef;
`;

const MessageCell = styled.td<{ $bold?: boolean }>`
  height: 22px;
  padding: 0 0 0 2px;
  border: solid #808080;
  border-width: 0 1px 1px 0;
  background: #fff;
  color: #0a7a0a;
  font: ${(p) => (p.$bold ? `bold 12px/20px ${strong}` : `12px/20px ${ui}`)};
`;

const TypeMark = styled.span<{ $child?: boolean }>`
  display: flex;
  align-items: center;
  gap: 2px;
  padding-left: ${(p) => (p.$child ? 19 : 0)}px;
  margin-left: -2px;
`;

const warning =
  "PIO inputs are not hardwired in test bench. Undefined values will be read from PIO inputs during simulation.";

const MessagesTable = () => (
  <MessagesBox>
    <Grid>
      <colgroup>
        <col width={81} />
        <col width={254} />
        <col />
      </colgroup>
      <thead>
        <tr>
          {["Type", "Path", "Message"].map((name) => (
            <HeadCell key={name} $height={24} $pad={9} scope="col">
              {name}
            </HeadCell>
          ))}
        </tr>
      </thead>
      <tbody>
        <tr>
          <MessageCell>
            <TypeMark>
              <ExpandMark open />
              <Info />
            </TypeMark>
          </MessageCell>
          <MessageCell>3 Info Messages</MessageCell>
          <MessageCell />
        </tr>
        {["unsaved.KEY", "unsaved.RH_TEMP_I2C_SDA", "unsaved.RH_TEMP_DRDY_N"].map((path) => (
          <tr key={path}>
            <MessageCell>
              <TypeMark $child>
                <Info />
              </TypeMark>
            </MessageCell>
            <MessageCell $bold>{path}</MessageCell>
            <MessageCell>{warning}</MessageCell>
          </tr>
        ))}
      </tbody>
    </Grid>
  </MessagesBox>
);

const StatusRow = styled.footer`
  display: flex;
  align-items: center;
  gap: 6px;
  height: 31px;
  padding: 0 6px 1px 5px;
`;

const StatusText = styled.output`
  flex: 1;
  height: 21px;
  padding-left: 8px;
  border: 1px solid #b5b5b5;
  background: #b4f3b4;
  line-height: 19px;
`;

/* ---------- page ---------- */

export default function App() {
  return (
    <Frame>
      <Global />
      <TitleBar>
        <svg width="16" height="20" viewBox="-1 -5 16 20">
          <AppIcon />
        </svg>
        <Title>Qsys - unsaved.qsys* (C:¥altera¥15.0¥Projects¥TEMP_LED¥unsaved.qsys)</Title>
        <Caption>
          <CaptionButton aria-label="Minimize window">
            <svg width="10" height="8"><path d="M0 4h10v3H0z" fill="#fff" /></svg>
          </CaptionButton>
          <CaptionButton aria-label="Maximize window">
            <svg width="10" height="9"><path d="M1 1h8v6H1z" fill="none" stroke="#fff" strokeWidth="2" /></svg>
          </CaptionButton>
          <CaptionButton $close aria-label="Close window">
            <svg width="10" height="9"><path d="M1 0l8 9M9 0L1 9" stroke="#fff" strokeWidth="2.500" /></svg>
          </CaptionButton>
        </Caption>
      </TitleBar>
      <Client>
        <MenuBar>
          {["File", "Edit", "System", "Generate", "View", "Tools", "Help"].map((m) => (
            <MenuItem key={m}>{m}</MenuItem>
          ))}
        </MenuBar>
        <Workspace>
          <Dock>
            <Grip />
            <DockButton aria-label="Parameters">
              <svg width="17" height="17" viewBox="0 0 17 17">
                <path d="M1 4h3v9H1z" fill="#e4e8ec" stroke="#888" />
                <path d="M5 3h11v9H5z" fill="#4f8be0" stroke="#3560b0" />
                <path d="M9 12h3v3H9zM4 15h12v2H4z" fill="#777" />
                <path d="M3 1l7 6-1 3-3-1-5-6z" fill="#f7d54a" stroke="#d8542a" />
              </svg>
            </DockButton>
            <DockLabel>Parameters</DockLabel>
            <DockButton aria-label="Pin">
              <svg width="12" height="9"><path d="M1 .5v8M1 2.500h6M1 6.500h6M7.500 0v9M8 4.500h4" stroke="#000" fill="none" /></svg>
            </DockButton>
            <DockButton aria-label="Restore">
              <svg width="12" height="14">
                <path d="M3.500 3.500h7v5h-7z" fill="#fff" stroke="#000" />
                <path d="M.5 6.500h7v5h-7z" fill="#fff" stroke="#000" />
                <path d="M3 2h8v2H3zM0 5h8v2H0z" />
              </svg>
            </DockButton>
          </Dock>

          <LeftColumn>
            <Panel>
              <TabStrip>
                <Tab label="IP Catalog" width={117} tone="on" icon={<CatalogIcon />} />
                <PanelControls />
              </TabStrip>
              <CatalogBody>
                <SearchRow>
                  <SearchBox>
                    <Magnifier />
                    <SearchInput type="text" aria-label="Search IP catalog" />
                    <IconButton aria-label="Clear search">
                      <svg width="13" height="13"><path d="M2 2l9 9M11 2l-9 9" stroke="#777" strokeWidth="3.500" /></svg>
                    </IconButton>
                  </SearchBox>
                  <GearButton aria-label="Catalog settings">
                    <Gear />
                  </GearButton>
                </SearchRow>
                <Scroller>
                  <TreeList $indent={6}>
                    <RootItem>Project</RootItem>
                    <TreeItem>
                      <Joint $last />
                      <Board />
                      <NodeIcon />
                      <NodeLabel $italic>New Component...</NodeLabel>
                    </TreeItem>
                    <RootItem>Library</RootItem>
                    <CatalogRows nodes={library} guides={[]} />
                  </TreeList>
                  <Bar before={3} />
                </Scroller>
                <ButtonRow>
                  <PushButton>New...</PushButton>
                  <PushButton disabled>Edit...</PushButton>
                  <Push />
                  <PushButton $tall>
                    <Plus />
                    Add...
                  </PushButton>
                </ButtonRow>
              </CatalogBody>
            </Panel>

            <Panel $grow>
              <TabStrip>
                <Tab label="Hierarchy" width={112} tone="on" icon={<TreeIcon />} />
                <Tab label="Device Family" width={116} tone="off" />
                <PanelControls />
              </TabStrip>
              <HierarchyBody>
                <Scroller $grow>
                  <TreeList $indent={4}>
                    {hierarchy.map((n) => (
                      <React.Fragment key={n.name}>
                        <TreeItem>
                          <Joint>
                            <ExpandMark open={n.kids.length > 0} />
                          </Joint>
                          <NodeIcon>{n.name.startsWith("nios") ? <Cpu /> : <Chip />}</NodeIcon>
                          <NodeLabel>{n.name}</NodeLabel>
                        </TreeItem>
                        {n.kids.map((k, i) => (
                          <TreeItem key={k}>
                            <Guide $line />
                            <Joint $last={i === n.kids.length - 1 && !n.name.startsWith("nios")}>
                              <ExpandMark />
                            </Joint>
                            <NodeIcon>
                              <Plug />
                            </NodeIcon>
                            <NodeLabel $selected={n.name === "RH_TEMP_DRDY_N" && k === "external_connection"}>{k}</NodeLabel>
                          </TreeItem>
                        ))}
                      </React.Fragment>
                    ))}
                  </TreeList>
                  <Bar before={127} after={131} />
                </Scroller>
              </HierarchyBody>
            </Panel>
          </LeftColumn>

          <RightColumn>
            <Panel $grow>
              <TabStrip>
                <Tab label="System Contents" width={151} tone="on" icon={<ContentsIcon />} />
                <Tab label="Address Map" width={111} tone="off" />
                <Tab label="Interconnect Requirements" width={181} tone="off" />
                <PanelControls />
              </TabStrip>
              <ContentsBody>
                <SideTools>
                  <ToolButton aria-label="Add"><Plus /></ToolButton>
                  <ToolButton aria-label="New subsystem"><Board size={16} plus /></ToolButton>
                  <ToolButton aria-label="Remove"><Cross /></ToolButton>
                  <ToolButton aria-label="Edit"><EditIcon /></ToolButton>
                  <Speck />
                  <ToolButton aria-label="Move to top"><Arrow kind="top" color="#4b86d8" /></ToolButton>
                  <ToolButton aria-label="Move up"><Arrow kind="up" color="#4b86d8" /></ToolButton>
                  <ToolButton aria-label="Move down"><Arrow kind="down" color="#8d8d8d" /></ToolButton>
                  <ToolButton aria-label="Move to bottom"><Arrow kind="bottom" color="#8d8d8d" /></ToolButton>
                </SideTools>
                <ContentsMain>
                  <InfoBar $height={28}>
                    <PathButton aria-label="Go to top">
                      <svg width="8" height="8"><path d="M0 0h8v2H0zM4 2l4 5H0z" fill="#888" /></svg>
                    </PathButton>
                    <PathButton aria-label="Go up">
                      <svg width="8" height="8"><path d="M4 2l4 5H0z" fill="#888" /></svg>
                    </PathButton>
                    <PathButton aria-label="Open system">
                      <svg width="16" height="16"><path d="M0 3h4V0h11v10h-3v3h3v3H4v-3h3v-3H0z" fill="#8c8c8c" /></svg>
                    </PathButton>
                    <InfoText>
                      <Strong>System:</Strong> unsaved
                    </InfoText>
                    <InfoText>
                      <Strong>Path:</Strong> RH_TEMP_DRDY_N.external_connection
                    </InfoText>
                  </InfoBar>
                  <ContentsTable />
                  <InfoBar $height={30}>
                    <IconButton aria-label="Show clocks"><Wave /></IconButton>
                    <IconButton aria-label="Show resets"><Wave split /></IconButton>
                    <Speck />
                    <IconButton aria-label="Filter"><Funnel /></IconButton>
                    <IconButton aria-label="Clear filter"><Funnel clear /></IconButton>
                    <InfoText>
                      <Strong>Current filter:</Strong> All Interfaces
                    </InfoText>
                  </InfoBar>
                </ContentsMain>
              </ContentsBody>
            </Panel>

            <Panel $fill="#99b4d1">
              <TabStrip>
                <Tab label="Messages" width={115} tone="focus" icon={<MessagesIcon />} />
                <PanelControls />
              </TabStrip>
              <MessagesBody>
                <MessagesTable />
              </MessagesBody>
            </Panel>
          </RightColumn>
        </Workspace>
        <StatusRow>
          <StatusText>0 Errors, 0 Warnings</StatusText>
          <PushButton>Generate HDL...</PushButton>
          <PushButton>Finish</PushButton>
        </StatusRow>
      </Client>
    </Frame>
  );
}
